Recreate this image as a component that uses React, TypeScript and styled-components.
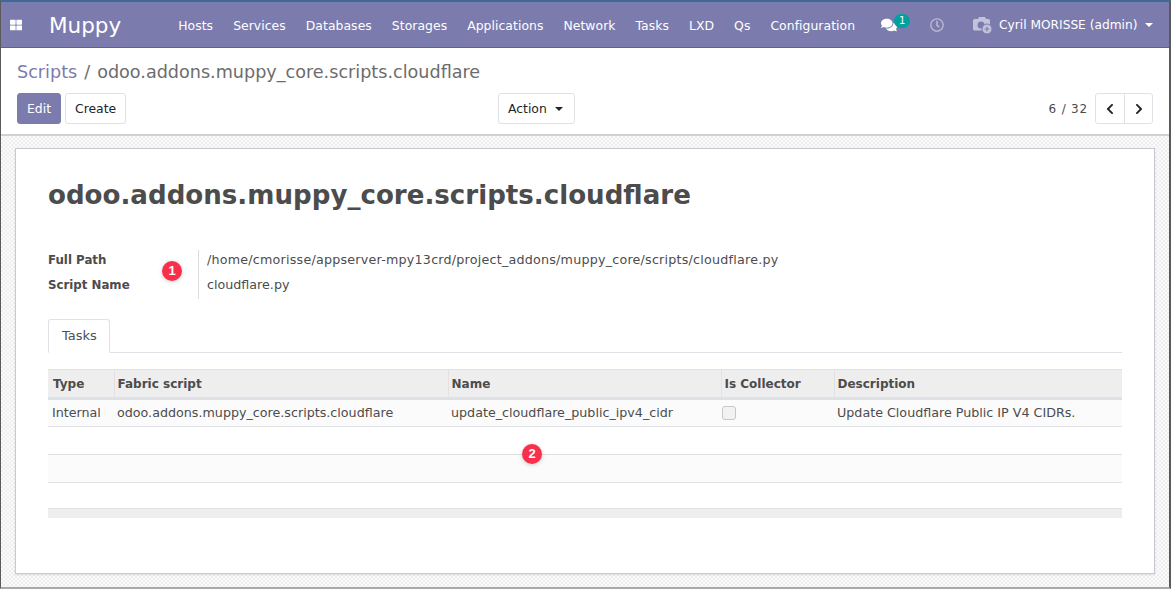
import styled, { createGlobalStyle } from "styled-components";
import { FaThLarge, FaComments, FaRegClock, FaChevronLeft, FaChevronRight } from "react-icons/fa";

const menuItems = [
  "Hosts",
  "Services",
  "Databases",
  "Storages",
  "Applications",
  "Network",
  "Tasks",
  "LXD",
  "Qs",
  "Configuration",
];

const GlobalStyle = createGlobalStyle`
  html, body {
    margin: 0;
    padding: 0;
    overflow: hidden;
  }
  body {
    font-family: "DejaVu Sans", "Open Sans", sans-serif;
    font-size: 12.7px;
    color: #4c4c4c;
  }
  * {
    box-sizing: border-box;
  }
`;

const Frame = styled.div`
  width: 1171px;
  height: 589px;
  display: flex;
  flex-direction: column;
  border-top: 2px solid #3f6a94;
  border-left: 1px solid #5a5a5a;
  border-right: 2px solid #5a5a5a;
  border-bottom: 2px solid #a9a9a9;
  background: #fff;
`;

const Navbar = styled.header`
  height: 46px;
  flex: none;
  display: flex;
  align-items: center;
  background: #7c7bad;
  border-bottom: 1px solid #5f5e97;
  color: #fff;
`;

const AppsButton = styled.span`
  display: flex;
  margin-left: 9px;
  font-size: 12px;
`;

const Brand = styled.span`
  margin: 2px 57px 0 27px;
  font-size: 21.5px;
`;

const Menu = styled.nav`
  display: flex;
  gap: 20px;
  margin-top: 2px;
  font-size: 12.4px;
  letter-spacing: 0.05px;
`;

const Systray = styled.div`
  display: flex;
  align-items: center;
  margin-left: 26px;
`;

const Messaging = styled.span`
  position: relative;
  display: flex;
  font-size: 16px;
`;

const CountBadge = styled.span`
  position: absolute;
  left: 13px;
  top: -3px;
  width: 16px;
  height: 14px;
  border-radius: 7px;
  background: #00a09d;
  color: #fff;
  font-size: 10px;
  line-height: 14px;
  text-align: center;
`;

const Activity = styled.span`
  display: flex;
  margin-left: 33px;
  font-size: 14px;
  color: #bdbcd6;
`;

const UserMenu = styled.span`
  display: flex;
  align-items: center;
  margin-left: 28px;
  font-size: 12.2px;
`;

const UserName = styled.span`
  margin-left: 6px;
`;

const Caret = styled.span<{ $color?: string }>`
  display: inline-block;
  margin-left: 8px;
  border-top: 4px solid ${(p) => p.$color || "#fff"};
  border-left: 4px solid transparent;
  border-right: 4px solid transparent;
`;

const ActionCaret = styled(Caret)`
  margin-right: 2px;
`;

const ControlPanel = styled.section`
  height: 88px;
  flex: none;
  padding: 12px 16px 0;
  background: #fff;
  border-bottom: 2px solid #d0d0d0;
`;

const Breadcrumb = styled.div`
  font-size: 17.6px;
  line-height: 24px;
  color: #6c6c6c;
`;

const BreadcrumbLink = styled.span`
  color: #7c7bad;
`;

const Separator = styled.span`
  margin: 0 7px;
`;

const Buttons = styled.div`
  display: grid;
  grid-template-columns: 481px auto 1fr;
  align-items: center;
  margin-top: 9px;
`;

const ButtonGroup = styled.div`
  display: flex;
  align-items: center;
  gap: 4px;
`;

const Button = styled.span<{ $primary?: boolean }>`
  display: flex;
  align-items: center;
  height: 31px;
  padding: 0 9px;
  border-radius: 3px;
  font-size: 12.4px;
  border: 1px solid ${(p) => (p.$primary ? "#7c7bad" : "#dee2e6")};
  background: ${(p) => (p.$primary ? "#7c7bad" : "#fff")};
  color: ${(p) => (p.$primary ? "#fff" : "#212529")};
`;

const Pager = styled.div`
  display: flex;
  align-items: center;
  justify-content: flex-end;
`;

const PagerValue = styled.span`
  margin-right: 7px;
  font-size: 12px;
  letter-spacing: 0.8px;
  color: #4c4c4c;
`;

const PagerButtons = styled.div`
  display: flex;
  height: 31px;
  border: 1px solid #dee2e6;
  border-radius: 3px;
  color: #212529;
`;

const PagerButton = styled.span`
  width: 28px;
  display: flex;
  align-items: center;
  justify-content: center;
  font-size: 12px;
  & + & {
    border-left: 1px solid #dee2e6;
  }
`;

const Content = styled.main`
  flex: 1;
  min-height: 0;
  padding: 12px 14px 13px 14px;
  background-color: #f9f9f9;
  background-image: conic-gradient(#efefef 25%, #fafafa 0 50%, #efefef 0 75%, #fafafa 0);
  background-size: 4px 4px;
`;

const Sheet = styled.article`
  position: relative;
  height: 100%;
  padding: 27px 32px 0 32px;
  background: #fff;
  border: 1px solid #c9c9d1;
  box-shadow: 0 1px 2px rgba(0, 0, 0, 0.1);
`;

const Title = styled.h1`
  margin: 0;
  font-size: 26.1px;
  line-height: 38px;
  font-weight: 700;
  color: #4c4c4c;
`;

const FieldGroup = styled.div`
  display: grid;
  grid-template-columns: 150px 1fr;
  margin-top: 36px;
`;

const Labels = styled.div`
  display: flex;
  flex-direction: column;
  gap: 7px;
  padding: 1px 0 5px;
`;

const Values = styled.div`
  display: flex;
  flex-direction: column;
  gap: 7px;
  padding: 1px 0 5px 8px;
  border-left: 1px solid #dcdcdc;
`;

const Label = styled.span`
  height: 18px;
  line-height: 18px;
  font-size: 11.8px;
  font-weight: 700;
  color: #4c4c4c;
`;

const Value = styled.span<{ $spacing?: number }>`
  height: 18px;
  line-height: 18px;
  letter-spacing: ${(p) => p.$spacing || 0}px;
  color: #4c4c4c;
`;

const TabBar = styled.div`
  display: flex;
  margin-top: 20px;
  height: 34px;
  border-bottom: 1px solid #dee2e6;
`;

const Tab = styled.span`
  height: 34px;
  padding: 0 12px 0 13px;
  line-height: 32px;
  font-size: 13px;
  color: #495057;
  background: #fff;
  border: 1px solid #dee2e6;
  border-bottom-color: #fff;
  border-radius: 3px 3px 0 0;
`;

const Table = styled.table`
  width: 100%;
  margin-top: 16px;
  border-collapse: collapse;
  table-layout: fixed;
`;

const HeadCell = styled.th`
  height: 29px;
  padding: 0 3px;
  text-align: left;
  font-size: 12px;
  font-weight: 700;
  color: #4c4c4c;
  background: #eeeeee;
  border-top: 1px solid #e2e2e2;
  border-bottom: 3px solid #dee2e6;
  &:first-child {
    padding-left: 5px;
  }
  & + & {
    border-left: 1px solid #e2e2e2;
  }
`;

const Row = styled.tr<{ $striped?: boolean }>`
  background: ${(p) => (p.$striped ? "#fbfbfb" : "#fff")};
`;

const Cell = styled.td<{ $height?: number }>`
  height: ${(p) => p.$height || 28}px;
  padding: 0 3px 2px;
  color: #4c4c4c;
  white-space: nowrap;
  border-bottom: 1px solid #dee2e6;
  &:first-child {
    padding-left: 4px;
  }
`;

const Checkbox = styled.span`
  display: block;
  width: 14px;
  height: 14px;
  margin: 2px 0 0 -2px;
  border: 1px solid #c8c8c8;
  border-radius: 3px;
  background: #f2f2f2;
`;

const FootCell = styled.td`
  height: 9px;
  padding: 0;
  background: #eeeeee;
  border-top: 1px solid #e2e2e2;
`;

const Marker = styled.span<{ $left: number; $top: number }>`
  position: absolute;
  left: ${(p) => p.$left}px;
  top: ${(p) => p.$top}px;
  width: 20px;
  height: 20px;
  border-radius: 50%;
  background: #f9304a;
  color: #fff;
  font-family: "Liberation Sans", sans-serif;
  font-size: 13px;
  font-weight: 700;
  line-height: 20px;
  text-align: center;
  box-shadow: 0 1px 4px rgba(0, 0, 0, 0.2);
`;

const AvatarIcon = () => (
  <svg width="21" height="20" viewBox="0 0 21 20">
    <path
      d="M1 5.5a1.5 1.5 0 0 1 1.5-1.5H6l1-2h6l1 2h2.5A1.5 1.5 0 0 1 18 5.500V15.500H2.500A1.500 1.500 0 0 1 1 14z"
      fill="#c3c2da"
    />
    <circle cx="9" cy="10" r="3.500" fill="#7c7bad" />
    <circle cx="15" cy="14" r="5" fill="#c3c2da" stroke="#7c7bad" />
    <path d="M15 11.500v5M12.500 14h5" stroke="#7c7bad" strokeWidth="1" />
  </svg>
);

const App = () => {
  return (
    <>
      <GlobalStyle />
      <Frame>
        <Navbar>
          <AppsButton>
            <FaThLarge />
          </AppsButton>
          <Brand>Muppy</Brand>
          <Menu>
            {menuItems.map((item) => (
              <span key={item}>{item}</span>
            ))}
          </Menu>
          <Systray>
            <Messaging>
              <FaComments />
              <CountBadge>1</CountBadge>
            </Messaging>
            <Activity>
              <FaRegClock />
            </Activity>
            <UserMenu>
              <AvatarIcon />
              <UserName>Cyril MORISSE (admin)</UserName>
              <Caret />
            </UserMenu>
          </Systray>
        </Navbar>
        <ControlPanel>
          <Breadcrumb>
            <BreadcrumbLink>Scripts</BreadcrumbLink>
            <Separator>/</Separator>
            odoo.addons.muppy_core.scripts.cloudflare
          </Breadcrumb>
          <Buttons>
            <ButtonGroup>
              <Button $primary>Edit</Button>
              <Button>Create</Button>
            </ButtonGroup>
            <Button>
              Action
              <ActionCaret $color="#212529" />
            </Button>
            <Pager>
              <PagerValue>6 / 32</PagerValue>
              <PagerButtons>
                <PagerButton>
                  <FaChevronLeft />
                </PagerButton>
                <PagerButton>
                  <FaChevronRight />
                </PagerButton>
              </PagerButtons>
            </Pager>
          </Buttons>
        </ControlPanel>
        <Content>
          <Sheet>
            <Title>odoo.addons.muppy_core.scripts.cloudflare</Title>
            <FieldGroup>
              <Labels>
                <Label>Full Path</Label>
                <Label>Script Name</Label>
              </Labels>
              <Values>
                <Value $spacing={0.22}>/home/cmorisse/appserver-mpy13crd/project_addons/muppy_core/scripts/cloudflare.py</Value>
                <Value>cloudflare.py</Value>
              </Values>
            </FieldGroup>
            <Marker $left={146} $top={112}>1</Marker>
            <TabBar>
              <Tab>Tasks</Tab>
            </TabBar>
            <Table>
              <colgroup>
                <col width="66" />
                <col width="334" />
                <col width="273" />
                <col width="113" />
                <col />
              </colgroup>
              <thead>
                <tr>
                  <HeadCell>Type</HeadCell>
                  <HeadCell>Fabric script</HeadCell>
                  <HeadCell>Name</HeadCell>
                  <HeadCell>Is Collector</HeadCell>
                  <HeadCell>Description</HeadCell>
                </tr>
              </thead>
              <tbody>
                <Row $striped>
                  <Cell>Internal</Cell>
                  <Cell>odoo.addons.muppy_core.scripts.cloudflare</Cell>
                  <Cell>update_cloudflare_public_ipv4_cidr</Cell>
                  <Cell>
                    <Checkbox />
                  </Cell>
                  <Cell>Update Cloudflare Public IP V4 CIDRs.</Cell>
                </Row>
                <Row>
                  <Cell colSpan={5} />
                </Row>
                <Row $striped>
                  <Cell colSpan={5} />
                </Row>
                <Row>
                  <Cell colSpan={5} $height={26} />
                </Row>
              </tbody>
              <tfoot>
                <tr>
                  <FootCell colSpan={5} />
                </tr>
              </tfoot>
            </Table>
            <Marker $left={506} $top={295}>2</Marker>
          </Sheet>
        </Content>
      </Frame>
    </>
  );
};

export default App;
